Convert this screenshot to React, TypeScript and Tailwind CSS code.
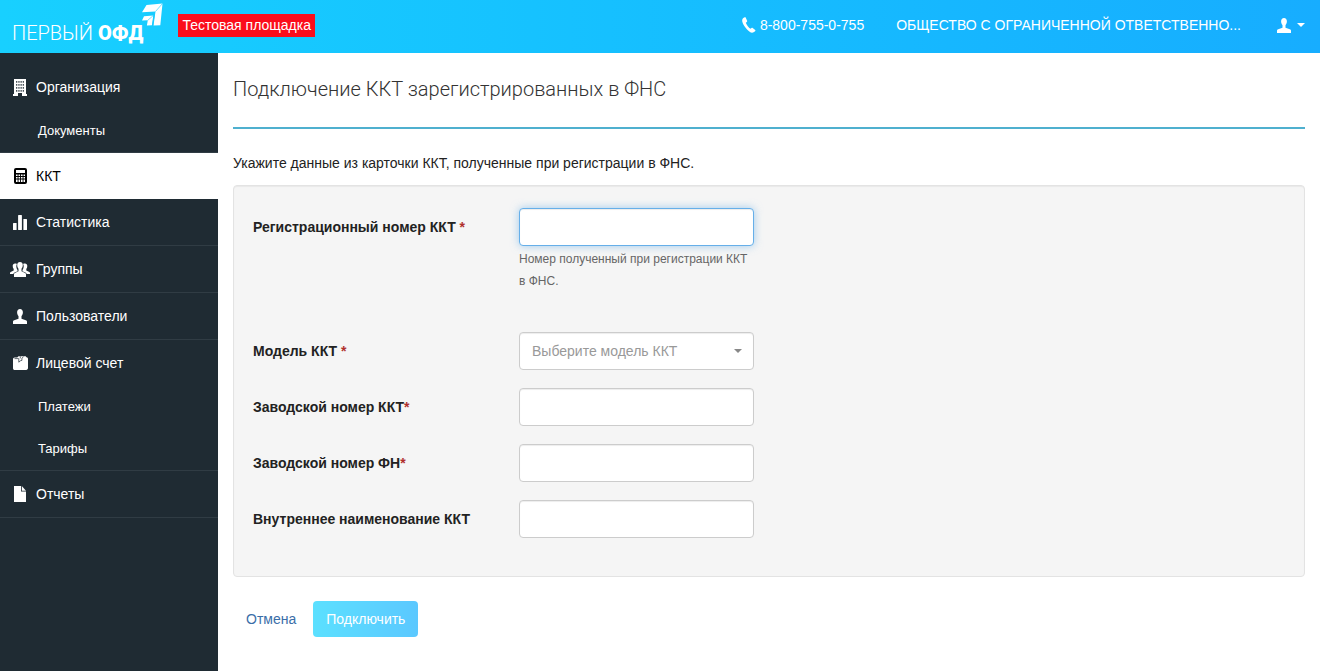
import React from 'react';

type IconProps = { className?: string };

const UserIcon: React.FC<IconProps> = ({ className }) => (
  <svg viewBox="0 0 14 15" fill="currentColor" className={className} aria-hidden="true">
    <path d="M7 0C5.2 0 4.1 1.3 4.1 3.2c0 1.6.7 3 1.4 3.900v2.600L1.200 11.300C.4 11.700 0 12 0 12.700V15h14v-2.300c0-.7-.4-1-1.200-1.400L8.500 9.700V7.100c.7-.9 1.400-2.300 1.400-3.900C9.900 1.300 8.800 0 7 0z" />
  </svg>
);

const PhoneIcon: React.FC<IconProps> = ({ className }) => (
  <svg viewBox="0 0 14 16" fill="currentColor" className={className} aria-hidden="true">
    <path d="M2.600.3 1.300 1C.2 1.800-.1 3.300.4 5.100c.8 3 4 7.400 6.900 9.500 1.600 1.200 3.100 1.600 4.300.7l1.500-1.100c.4-.3.5-.8.1-1.100l-2.500-2.200c-.3-.3-.8-.3-1.200 0l-1.100.8C6.700 10.600 4.700 7.900 3.800 5.700l1-.8c.4-.3.5-.7.3-1.100L3.700.6C3.500.2 3 .1 2.600.3z" />
  </svg>
);

const BuildingIcon: React.FC<IconProps> = ({ className }) => (
  <svg viewBox="0 0 14 17" className={className} aria-hidden="true">
    <path fill="currentColor" d="M1 0h12v15h1v2H9v-3H5v3H0v-2h1z" />
    <path
      fill="#1f2b33"
      fillOpacity=".8"
      d="M3 2h1.300v1.700H3zM5.300 2h1.300v1.700H5.300zM7.500 2h1.300v1.700H7.500zM9.700 2h1.300v1.700H9.700zM3 5h1.300v1.700H3zM5.300 5h1.300v1.700H5.300zM7.500 5h1.300v1.700H7.500zM9.700 5h1.300v1.700H9.700zM3 8h1.300v1.700H3zM5.300 8h1.300v1.700H5.300zM7.500 8h1.300v1.700H7.500zM9.700 8h1.300v1.700H9.700zM3 11h1.300v1.700H3zM5.300 11h1.300v1.700H5.300zM7.500 11h1.300v1.700H7.500zM9.700 11h1.300v1.700H9.700z"
    />
  </svg>
);

const CalculatorIcon: React.FC<IconProps> = ({ className }) => (
  <svg viewBox="0 0 13 16" className={className} aria-hidden="true">
    <rect width="13" height="16" rx="2" fill="currentColor" />
    <path
      fill="#fff"
      d="M2 2h9v3H2zM2 6.500h1.600V8H2zM4.500 6.500h1.600V8H4.500zM7 6.500h1.600V8H7zM9.500 6.500H11V8H9.500zM2 9h1.600v1.600H2zM4.500 9h1.600v1.600H4.500zM7 9h1.600v1.600H7zM9.500 9H11v1.600H9.500zM2 11.500h1.600V14H2zM4.500 11.500h1.600V14H4.500zM7 11.500h1.600V14H7zM9.500 11.500H11V14H9.500z"
    />
  </svg>
);

const StatsIcon: React.FC<IconProps> = ({ className }) => (
  <svg viewBox="0 0 14 15" fill="currentColor" className={className} aria-hidden="true">
    <rect x="0" y="8" width="3.6" height="7" rx=".5" />
    <rect x="5.100" y="0" width="3.800" height="15" rx=".5" />
    <rect x="10.400" y="4" width="3.600" height="11" rx=".5" />
  </svg>
);

const GroupIcon: React.FC<IconProps> = ({ className }) => (
  <svg viewBox="0 0 20 15" fill="currentColor" className={className} aria-hidden="true">
    <path d="M5 1.500C3.600 1.500 2.700 2.500 2.700 4c0 1.200.4 2.200 1 2.900v1.500L.7 9.900c-.5.300-.7.700-.7 1.200V12h3.300c.2-.7.700-1.200 1.400-1.500l2.800-1.300V7.900C6.800 7 6.300 5.700 6.300 4.200c0-.9.200-1.700.6-2.300-.5-.3-1.100-.4-1.900-.4z" />
    <path d="M15 1.500c1.400 0 2.300 1 2.300 2.500 0 1.200-.4 2.200-1 2.900v1.500l3 1.500c.5.300.7.700.7 1.200V12h-3.300c-.2-.7-.7-1.200-1.400-1.500l-2.800-1.300V7.900c.7-.9 1.200-2.200 1.200-3.700 0-.9-.2-1.700-.6-2.300.5-.3 1.100-.4 1.900-.4z" />
    <path d="M10 0C8.300 0 7.200 1.200 7.200 3c0 1.600.6 3 1.300 3.800v2.400l-3.600 1.700c-.6.300-.9.700-.9 1.400V15h12v-2.700c0-.7-.3-1.100-.9-1.400l-3.600-1.700V6.800c.7-.8 1.300-2.200 1.300-3.800 0-1.800-1.100-3-2.800-3z" />
  </svg>
);

const WalletIcon: React.FC<IconProps> = ({ className }) => (
  <svg viewBox="0 0 15 14" className={className} aria-hidden="true">
    <path
      fill="currentColor"
      d="M1.700 1.500h2.500L5.500.3h7.300l.5.900c1 0 1.700.6 1.700 1.500v9.400c0 1.100-.7 1.900-1.800 1.900H1.800C.7 14 0 13.200 0 12.200V3.300c0-1 .7-1.800 1.700-1.800z"
    />
    <path fill="none" stroke="#1f2b33" strokeWidth=".7" d="M1.500 2.600h4M5.800 2.400v3.800l1.600-1.400 1.500-.4V2.200L10.500.8M7.300.4v2" />
  </svg>
);

const FileIcon: React.FC<IconProps> = ({ className }) => (
  <svg viewBox="0 0 12 16" fill="currentColor" className={className} aria-hidden="true">
    <path d="M0 0h7v5.500h5V16H0z" />
    <path d="M7.800 0 12 4.700H7.800z" />
  </svg>
);

const LogoMark: React.FC<IconProps> = ({ className }) => (
  <svg viewBox="0 0 22 23" className={className} aria-hidden="true">
    <path fill="#fff" d="M4.500 2 20.500.5 18.300 22.300l-6.800.2 2-14L0 9.300z" />
    <path fill="#fff" d="M2 13.200l9.300-.7-1.400 9.800-5 .2.900-5.200L0 17.600z" />
    <path stroke="#18cbff" strokeWidth=".6" d="M20.500.5 13.500 8.500M11.300 12.500l-5.500 4.800" />
    <path stroke="#18cbff" strokeWidth="1" d="M12.200 11.500 10.600 23" />
  </svg>
);

interface MenuItem {
  label: string;
  icon: React.FC<IconProps>;
  iconClass: string;
  active?: boolean;
  children?: string[];
}

const menu: MenuItem[] = [
  { label: 'Организация', icon: BuildingIcon, iconClass: 'h-[17px] w-[14px]', children: ['Документы'] },
  { label: 'ККТ', icon: CalculatorIcon, iconClass: 'h-4 w-[13px]', active: true },
  { label: 'Статистика', icon: StatsIcon, iconClass: 'h-[15px] w-[14px]' },
  { label: 'Группы', icon: GroupIcon, iconClass: 'h-[15px] w-5' },
  { label: 'Пользователи', icon: UserIcon, iconClass: 'h-[15px] w-[14px]' },
  { label: 'Лицевой счет', icon: WalletIcon, iconClass: 'h-[14px] w-[15px]', children: ['Платежи', 'Тарифы'] },
  { label: 'Отчеты', icon: FileIcon, iconClass: 'h-4 w-3' },
];

const Header: React.FC = () => (
  <header className="flex h-[53px] items-center bg-linear-to-r from-[#18d0ff] to-[#17adff] pr-[15px] pb-[3px] pl-3 text-white">
    <a href="#" className="flex items-start" aria-label="Первый ОФД">
      <span className="pt-4 font-[Roboto,sans-serif] text-xl leading-9">
        <span className="font-light">ПЕРВЫЙ</span> <span className="font-black">ОФД</span>
      </span>
      <LogoMark className="mt-1 -ml-px h-[23px] w-[22px]" />
    </a>
    <span className="ml-[14px] bg-[#fb0d1b] px-1 leading-[23px]">Тестовая площадка</span>
    <a href="tel:88007550755" className="ml-auto flex items-center gap-1">
      <PhoneIcon className="h-4 w-[14px]" />
      8-800-755-0-755
    </a>
    <a href="#" className="ml-8">ОБЩЕСТВО С ОГРАНИЧЕННОЙ ОТВЕТСТВЕННО...</a>
    <button type="button" className="ml-9 flex items-center gap-[6px]" aria-label="Профиль">
      <UserIcon className="h-[15px] w-[14px]" />
      <span className="border-x-4 border-t-4 border-x-transparent border-t-white" />
    </button>
  </header>
);

const Sidebar: React.FC = () => (
  <nav className="w-[218px] shrink-0 bg-[#1f2b33] pt-[11px] text-white">
    <ul>
      {menu.map(({ label, icon: Icon, iconClass, active, children }) => (
        <li key={label} className={active ? 'bg-white text-black' : 'border-b border-[#303c44]'}>
          <a href="#" className="flex h-[46px] items-center gap-[6px] pl-[10px]">
            <span className="flex w-5 justify-center">
              <Icon className={iconClass} />
            </span>
            {label}
          </a>
          {children && (
            <ul>
              {children.map((child) => (
                <li key={child}>
                  <a href="#" className="block pl-[38px] text-[13px] leading-[42px]">{child}</a>
                </li>
              ))}
            </ul>
          )}
        </li>
      ))}
    </ul>
  </nav>
);

const control = 'block h-[38px] w-full rounded-sm border border-[#ccc] bg-white px-3 shadow-[inset_0_1px_1px_rgba(0,0,0,0.075)] outline-none';
const focused = 'block h-[38px] w-full rounded-sm border border-[#66afe9] bg-white px-3 shadow-[inset_0_1px_1px_rgba(0,0,0,0.075),0_0_8px_rgba(102,175,233,0.6)] outline-none';

interface FieldProps {
  id: string;
  label: React.ReactNode;
  children: React.ReactNode;
}

const Field: React.FC<FieldProps> = ({ id, label, children }) => (
  <div className="grid grid-cols-[266px_235px] items-start">
    <label htmlFor={id} className="leading-[38px] font-bold">{label}</label>
    <div>{children}</div>
  </div>
);

const Star: React.FC = () => <span className="text-[#b0302c]">*</span>;

const App: React.FC = () => {
  return (
    <div className="flex min-h-screen flex-col bg-white font-['Liberation_Sans',Arial,sans-serif] text-sm text-[#222]">
      <Header />
      <div className="flex flex-1">
        <Sidebar />
        <main className="flex-1 px-[15px]">
          <h1 className="border-b-2 border-[#4fb0cf] pt-5 pb-[22px] font-[Roboto,sans-serif] text-xl leading-8 font-light text-[#333]">
            Подключение ККТ зарегистрированных в ФНС
          </h1>
          <p className="pt-[23px] pb-[11px] leading-[22px]">
            Укажите данные из карточки ККТ, полученные при регистрации в ФНС.
          </p>
          <form>
            <div className="flex flex-col gap-[18px] rounded-sm border border-[#e3e3e3] bg-[#f5f5f5] px-[19px] pt-[22px] pb-[38px] shadow-[inset_0_1px_1px_rgba(0,0,0,0.05)]">
              <Field id="reg" label={<>Регистрационный номер ККТ <Star /></>}>
                <input id="reg" type="text" className={focused} />
                <p className="pt-[2px] pb-[22px] text-xs leading-[22px] text-[#666]">
                  Номер полученный при регистрации ККТ в&nbsp;ФНС.
                </p>
              </Field>
              <Field id="model" label={<>Модель ККТ <Star /></>}>
                <div className="relative">
                  <select id="model" defaultValue="" className={`${control} appearance-none text-[#999]`}>
                    <option value="">Выберите модель ККТ</option>
                  </select>
                  <span className="pointer-events-none absolute top-[17px] right-3 border-x-4 border-t-4 border-x-transparent border-t-[#888]" />
                </div>
              </Field>
              <Field id="serial" label={<>Заводской номер ККТ<Star /></>}>
                <input id="serial" type="text" className={control} />
              </Field>
              <Field id="fn" label={<>Заводской номер ФН<Star /></>}>
                <input id="fn" type="text" className={control} />
              </Field>
              <Field id="name" label="Внутреннее наименование ККТ">
                <input id="name" type="text" className={control} />
              </Field>
            </div>
            <div className="mt-6 flex items-center gap-[17px] pl-[13px]">
              <a href="#" className="text-[#3a6ea8]">Отмена</a>
              <button type="button" className="h-9 rounded-sm bg-linear-to-r from-[#5be0ff] to-[#5bc8ff] px-[13px] text-white">
                Подключить
              </button>
            </div>
          </form>
        </main>
      </div>
    </div>
  );
};

export default App;
